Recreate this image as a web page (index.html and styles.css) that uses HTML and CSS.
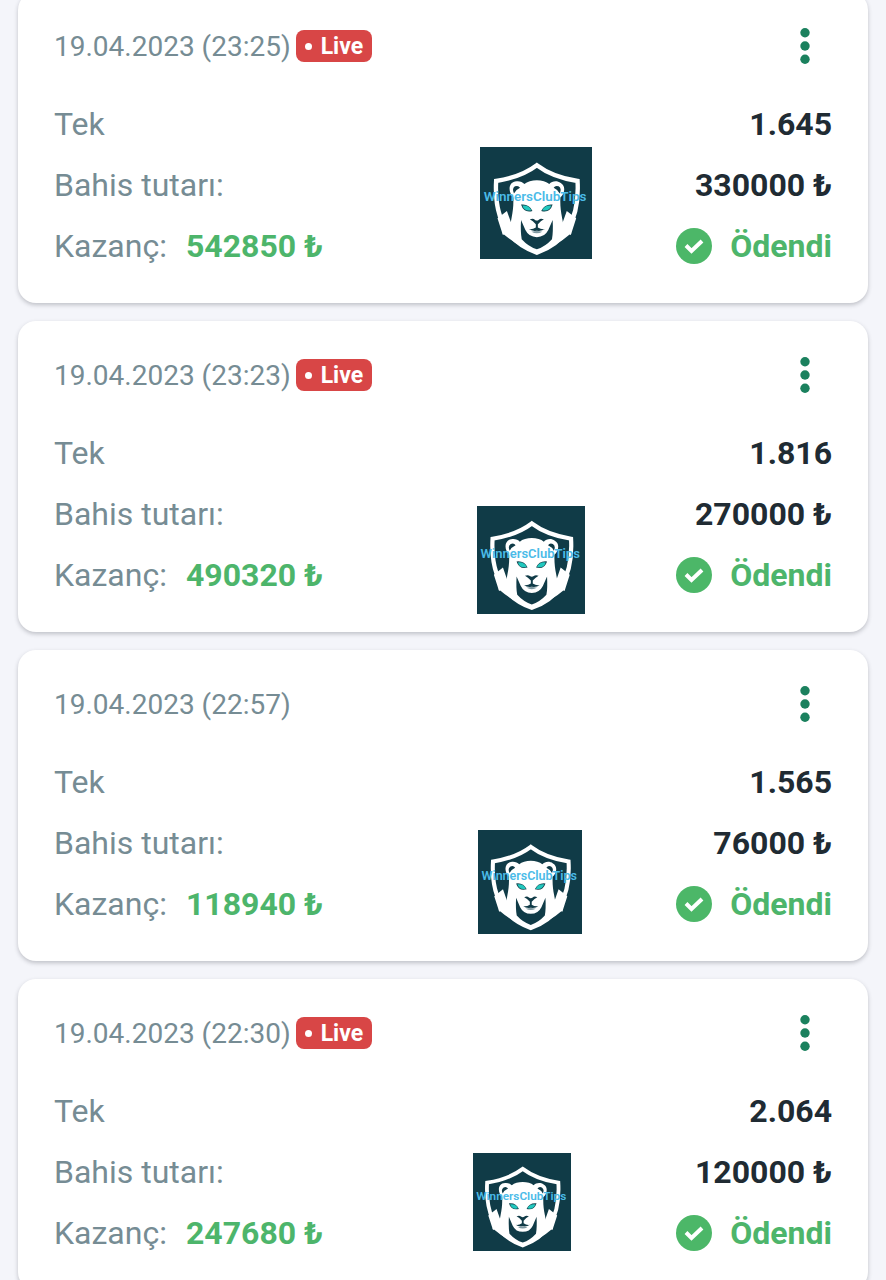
FILE: index.html
```html
<!DOCTYPE html>
<html lang="tr">
<head>
<meta charset="utf-8">
<meta name="viewport" content="width=device-width, initial-scale=1">
<title>Bahislerim</title>
<link rel="stylesheet" href="styles.css">
</head>
<body>
<svg class="defs" aria-hidden="true">
  <symbol id="dots" viewBox="0 0 12 36"><circle cx="6" cy="4.700" r="4.700"/><circle cx="6" cy="18" r="4.700"/><circle cx="6" cy="31.300" r="4.700"/></symbol>
  <symbol id="check" viewBox="0 0 36 36"><circle cx="18" cy="18" r="18" fill="#4cb768"/><path d="M10 17.500l5.500 5.500L26 13" fill="none" stroke="#fff" stroke-width="4"/></symbol>
  <symbol id="lion" viewBox="0 0 333 333">
    <rect width="333" height="333" fill="#103b47"/>
    <path d="M169 54Q215 89 290 101C295 190 272 278 169 314C66 278 43 190 48 101Q123 89 169 54Z" fill="none" stroke="#fff" stroke-width="13"/>
    <path d="M99 150C82 133 84 103 109 102C119 101 127 105 132 110C148 95 190 95 206 110C214 101 229 99 240 107C256 116 252 138 239 150C238 172 240 190 244 210L248 232L272 256Q224 298 169 314Q114 298 66 256L90 232L94 210C98 190 100 172 99 150Z" fill="#fff"/>
    <path d="M80 190L52 212L68 262L100 244L92 224ZM258 190L286 212L270 262L238 244L246 224Z" fill="#fff"/>
    <path d="M101 138Q94 124 104 117Q114 113 119 121Q106 127 101 138ZM237 138Q244 124 234 117Q224 113 219 121Q232 127 237 138Z" fill="#103b47"/>
    <path d="M122 217L135 247Q145 268 169 268Q193 268 203 247L216 217Q218 252 214 274Q194 296 169 304Q144 296 124 274Q120 252 122 217ZM148 215Q158 211 163 216Q169 221 175 216Q180 211 190 215L181 221L172 230V239Q182 246 193 244Q184 251 169 249Q154 251 145 244Q156 246 166 239V230L157 221Z" fill="#103b47"/>
    <path d="M122 171Q146 168 156 190Q130 197 122 171ZM216 171Q192 168 182 190Q208 197 216 171Z" fill="#14424d"/>
    <path d="M126 174Q146 172 153 188Q132 193 126 174ZM212 174Q192 172 185 188Q206 193 212 174Z" fill="#22c8be"/>
    <path d="M153 252Q169 248 185 252Q169 261 153 252Z" fill="#7f99a1"/>
  </symbol>
</svg>
<main class="bets">
  <article class="card">
    <header class="card-head"><time class="date" datetime="2023-04-19T23:25">19.04.2023 (23:25)</time><span class="live">Live</span><button class="menu" type="button" aria-label="Menü"><svg><use href="#dots"/></svg></button></header>
    <div class="row"><span>Tek</span><strong>1.645</strong></div>
    <div class="row"><span>Bahis tutarı:</span><strong>330000 ₺</strong></div>
    <div class="row"><span>Kazanç:</span><b class="win">542850 ₺</b><span class="paid"><svg><use href="#check"/></svg>Ödendi</span></div>
    <svg class="stamp stamp-xl" viewBox="0 0 333 333"><use href="#lion"/><text class="stamp-text" x="11" y="160">WinnersClubTips</text></svg>
  </article>
  <article class="card">
    <header class="card-head"><time class="date" datetime="2023-04-19T23:23">19.04.2023 (23:23)</time><span class="live">Live</span><button class="menu" type="button" aria-label="Menü"><svg><use href="#dots"/></svg></button></header>
    <div class="row"><span>Tek</span><strong>1.816</strong></div>
    <div class="row"><span>Bahis tutarı:</span><strong>270000 ₺</strong></div>
    <div class="row"><span>Kazanç:</span><b class="win">490320 ₺</b><span class="paid"><svg><use href="#check"/></svg>Ödendi</span></div>
    <svg class="stamp stamp-l" viewBox="0 0 333 333"><use href="#lion"/><text class="stamp-text" x="11" y="160">WinnersClubTips</text></svg>
  </article>
  <article class="card">
    <header class="card-head"><time class="date" datetime="2023-04-19T22:57">19.04.2023 (22:57)</time><button class="menu" type="button" aria-label="Menü"><svg><use href="#dots"/></svg></button></header>
    <div class="row"><span>Tek</span><strong>1.565</strong></div>
    <div class="row"><span>Bahis tutarı:</span><strong>76000 ₺</strong></div>
    <div class="row"><span>Kazanç:</span><b class="win">118940 ₺</b><span class="paid"><svg><use href="#check"/></svg>Ödendi</span></div>
    <svg class="stamp stamp-m" viewBox="0 0 333 333"><use href="#lion"/><text class="stamp-text" x="11" y="160">WinnersClubTips</text></svg>
  </article>
  <article class="card">
    <header class="card-head"><time class="date" datetime="2023-04-19T22:30">19.04.2023 (22:30)</time><span class="live">Live</span><button class="menu" type="button" aria-label="Menü"><svg><use href="#dots"/></svg></button></header>
    <div class="row"><span>Tek</span><strong>2.064</strong></div>
    <div class="row"><span>Bahis tutarı:</span><strong>120000 ₺</strong></div>
    <div class="row"><span>Kazanç:</span><b class="win">247680 ₺</b><span class="paid"><svg><use href="#check"/></svg>Ödendi</span></div>
    <svg class="stamp stamp-s" viewBox="0 0 333 333"><use href="#lion"/><text class="stamp-text" x="11" y="160">WinnersClubTips</text></svg>
  </article>
</main>
</body>
</html>
```
FILE: styles.css
```css
* { box-sizing: border-box; }
body {
  margin: 0;
  height: 100vh;
  overflow: hidden;
  background: #f4f5fa;
  color: #768c94;
  font-family: Roboto, "Noto Sans", sans-serif;
  font-size: 32px;
}
.defs { position: absolute; width: 0; height: 0; }
.bets {
  display: flex;
  flex-direction: column;
  gap: 18px;
  margin-top: -8px;
  padding: 0 18px 18px;
}
.card {
  position: relative;
  padding: 36px 36px 27px;
  border-radius: 18px;
  background: #fff;
  box-shadow: 0 2px 4px rgba(40, 44, 54, 0.26);
}
.card-head {
  display: flex;
  align-items: center;
  height: 36px;
  margin-bottom: 29px;
}
.date { font-size: 28px; }
.live {
  display: flex;
  align-items: center;
  gap: 9px;
  height: 32px;
  margin-left: 5px;
  padding: 0 9px;
  border-radius: 8px;
  background: #d84646;
  color: #fff;
  font-size: 23px;
  font-weight: 700;
}
.live::before {
  content: "";
  width: 7px;
  height: 7px;
  border-radius: 50%;
  background: #fff;
}
.menu {
  display: flex;
  margin: 0 21px 0 auto;
  padding: 0;
  border: 0;
  background: none;
  fill: #1b815e;
}
.menu svg { width: 12px; height: 36px; }
.row {
  display: flex;
  align-items: center;
  height: 61px;
}
.row strong {
  margin-left: auto;
  color: #202b33;
  font-weight: 700;
}
.win {
  margin-left: 19px;
  color: #4db56b;
  font-weight: 700;
}
.paid {
  display: flex;
  align-items: center;
  gap: 18px;
  margin-left: auto;
  color: #4db56b;
  font-weight: 700;
}
.paid svg { width: 36px; height: 36px; }
.stamp { position: absolute; }
.stamp-xl { left: 462px; top: 155px; width: 112px; height: 112px; }
.stamp-l { left: 459px; top: 185px; width: 108px; height: 108px; }
.stamp-m { left: 460px; top: 180px; width: 104px; height: 104px; }
.stamp-s { left: 455px; top: 174px; width: 98px; height: 98px; }
.stamp-text {
  fill: #4bbbe8;
  font-size: 40px;
  font-weight: 600;
}
```
